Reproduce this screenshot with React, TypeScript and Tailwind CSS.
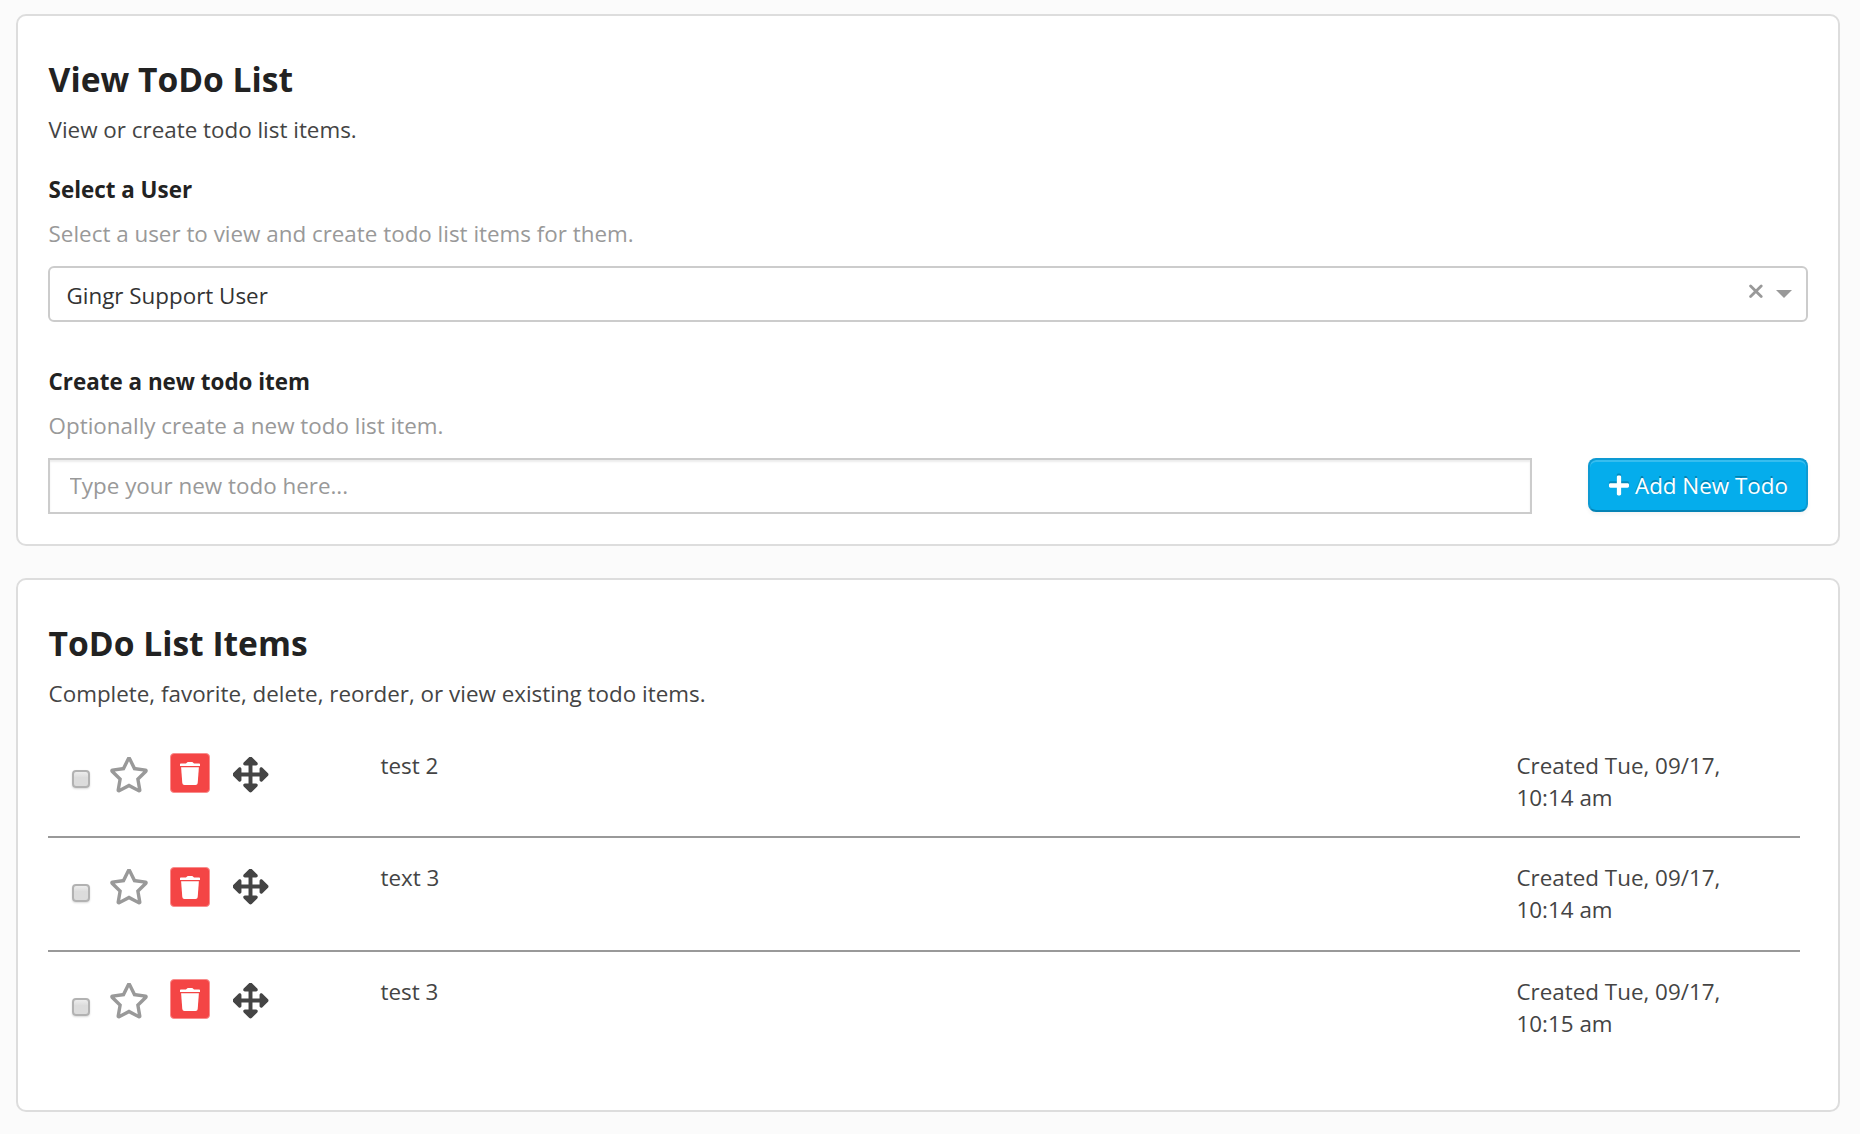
import React from 'react';
import { FaArrowsAlt, FaPlus, FaRegStar } from 'react-icons/fa';

interface TodoItem {
  text: string;
  time: string;
  rowClass: string;
  checkClass: string;
  trashClass: string;
}

const items: TodoItem[] = [
  { text: 'test 2', time: '10:14 am', rowClass: 'h-[112px] border-b-2', checkClass: 'mt-[44px]', trashClass: 'mt-[27px]' },
  { text: 'text 3', time: '10:14 am', rowClass: 'h-[114px] border-b-2', checkClass: 'mt-[46px]', trashClass: 'mt-[29px]' },
  { text: 'test 3', time: '10:15 am', rowClass: 'h-[114px]', checkClass: 'mt-[46px]', trashClass: 'mt-[27px]' },
];

const App: React.FC = () => {
  return (
    <div className="min-h-screen bg-[#fbfbfb] px-4 pt-3.5 font-['Open_Sans',sans-serif] text-[22.4px] leading-8 text-[#444]">
      {/* Create form */}
      <section className="h-[532px] w-[1824px] rounded-[10px] border-2 border-[#ddd] bg-white px-[30px] pt-[39px]">
        <h1 className="pl-[0.6px] text-[33.6px] font-bold leading-[48px] text-[#222]">View ToDo List</h1>
        <p className="mt-[11px] pl-[0.6px]">View or create todo list items.</p>

        <h2 className="mt-[28px] pl-[0.6px] font-bold text-[#222]">Select a User</h2>
        <p className="mt-[12px] pl-[0.6px] text-[#999]">Select a user to view and create todo list items for them.</p>
        <div className="mt-[16px] flex h-14 items-start rounded-md border-2 border-[#ccc] bg-white pl-4 pr-[14px]">
          <span className="mt-[12px] grow pl-[0.5px] text-[#333]">Gingr Support User</span>
          <ClearIcon />
          <svg className="ml-[13px] mt-[22px] h-2 w-4" viewBox="0 0 16 8" fill="#999">
            <path d="M0 0h16L8 8z" />
          </svg>
        </div>

        <h2 className="mt-[44px] pl-[0.6px] font-bold text-[#222]">Create a new todo item</h2>
        <p className="mt-[12px] pl-[0.6px] text-[#999]">Optionally create a new todo list item.</p>
        <div className="mt-[16px] flex items-start justify-between">
          <input
            className="h-14 w-[1484px] border-2 border-[#ccc] bg-white px-[19.5px] pb-px shadow-[inset_0_2px_2px_rgba(0,0,0,0.075)] placeholder:text-[#999]"
            placeholder="Type your new todo here..."
          />
          <button className="flex h-[54px] w-[220px] items-center rounded-lg border-2 border-[#0d9ad3] border-b-[#0583b5] bg-[#05adec] pl-[19px] text-white shadow-[inset_0_2px_0_rgba(255,255,255,0.2),0_2px_4px_rgba(0,0,0,0.05)] [text-shadow:0_-2px_0_rgba(0,0,0,0.25)]">
            <FaPlus className="h-[23px] w-[20px] drop-shadow-[0_-2px_0_rgba(0,0,0,0.2)]" />
            <span className="ml-[6px] pt-px">Add New Todo</span>
          </button>
        </div>
      </section>

      {/* Items */}
      <section className="mt-8 h-[534px] w-[1824px] rounded-[10px] border-2 border-[#ddd] bg-white px-[30px] pt-[39px]">
        <h1 className="pl-[0.6px] text-[33.6px] font-bold leading-[48px] text-[#222]">ToDo List Items</h1>
        <p className="mt-[11px] pl-[0.6px]">Complete, favorite, delete, reorder, or view existing todo items.</p>
        <div className="mt-[16px] w-[1752px]">
          {items.map((item) => (
            <TodoRow key={item.text} item={item} />
          ))}
        </div>
      </section>
    </div>
  );
};

const TodoRow: React.FC<{ item: TodoItem }> = ({ item }) => {
  return (
    <div className={`flex items-start border-[#999] pl-6 ${item.rowClass}`}>
      <input
        type="checkbox"
        className={`size-[18px] appearance-none rounded border-2 border-[#b2b2b2] bg-linear-to-b from-[#ededed] to-[#dcdcdc] to-40% shadow-[0_1px_2px_rgba(0,0,0,0.15)] ${item.checkClass}`}
      />
      <FaRegStar className="ml-[18px] mt-[30px] h-[37px] w-[42px] p-[0.5px] text-[#999]" />
      <button className={`ml-[20px] flex size-10 justify-center rounded border border-[#f98c8c] bg-[#f44545] pt-[8px] ${item.trashClass}`}>
        <TrashIcon />
      </button>
      <FaArrowsAlt className="ml-[22px] mt-[30px] size-[37px] p-[0.5px] text-[#444]" />
      <div className="ml-[111.5px] mt-[24px] w-[1136px]">{item.text}</div>
      <div className="mt-[24px] w-[230px]">Created Tue, 09/17, {item.time}</div>
    </div>
  );
};

const ClearIcon: React.FC = () => (
  <svg className="mt-[16px] size-[14px]" viewBox="0 0 14 14" stroke="#999" strokeWidth="2.8" strokeLinecap="round">
    <path d="M1.6 1.9l10.6 10.6M12.2 1.9L1.6 12.5" />
  </svg>
);

const TrashIcon: React.FC = () => (
  <svg className="h-[23px] w-5" viewBox="0 0 20 23" fill="white">
    <path d="M0 2.2Q0 1.5 0.8 1.5H6L7.3 0.3Q7.6 0 8 0H12Q12.4 0 12.7 0.3L14 1.5H19.2Q20 1.5 20 2.2V4H0Z" />
    <path d="M1.1 5.2H18.9L17.7 21Q17.5 22.9 15.6 22.9H4.4Q2.5 22.9 2.3 21Z" />
  </svg>
);

export default App;
